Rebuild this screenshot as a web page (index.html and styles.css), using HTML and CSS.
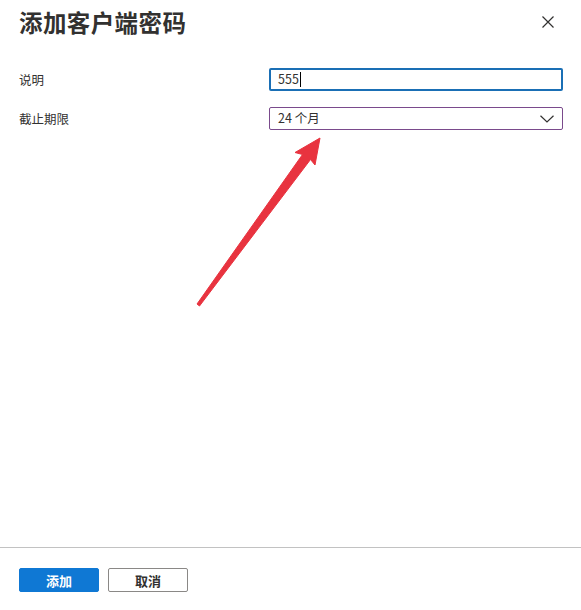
FILE: index.html
```html
<!DOCTYPE html>
<html lang="zh-CN">
<head>
<meta charset="utf-8">
<title>添加客户端密码</title>
<link rel="stylesheet" href="styles.css">
</head>
<body>
<div class="panel">
  <header class="header">
    <h1 class="title">添加客户端密码</h1>
    <button class="close" aria-label="关闭">
      <svg width="12" height="12" viewBox="0 0 12 12"><path d="M0.5 0.5 L11.5 11.5 M11.5 0.5 L0.5 11.5" stroke="#323130" stroke-width="1.2" fill="none"/></svg>
    </button>
  </header>
  <main class="form">
    <div class="row">
      <label class="label">说明</label>
      <div class="field input-field"><span class="value">555</span><span class="caret"></span></div>
    </div>
    <div class="row">
      <label class="label">截止期限</label>
      <div class="field select-field">
        <span class="value">24 个月</span>
        <svg class="chevron" width="14" height="8" viewBox="0 0 14 8"><path d="M0.5 0.8 L7 7 L13.5 0.8" stroke="#323130" stroke-width="1.2" fill="none"/></svg>
      </div>
    </div>
  </main>
  <footer class="footer">
    <button class="btn primary">添加</button>
    <button class="btn secondary">取消</button>
  </footer>
  <svg class="arrow" width="581" height="610" viewBox="0 0 581 610">
    <path d="M320 138 L315 165 L310.5 159.5 L199.5 306 L197 304 L302.5 154.5 L295 152.5 Z" fill="#e8333f" stroke="#e8333f" stroke-width="1" stroke-linejoin="round"/>
  </svg>
</div>
</body>
</html>
```
FILE: styles.css
```css
* { box-sizing: border-box; }
html, body { margin: 0; padding: 0; background: #fff; }
body {
  font-family: "Noto Sans CJK SC", "Noto Sans", "Liberation Sans", sans-serif;
  color: #323130;
}
.panel {
  position: relative;
  width: 581px;
  height: 610px;
  display: flex;
  flex-direction: column;
}
.header {
  height: 44px;
  padding: 0 20px 0 19px;
  display: flex;
  align-items: center;
  justify-content: space-between;
}
.title {
  margin: 0;
  font-size: 23.5px;
  font-weight: 700;
  letter-spacing: 0.4px;
  color: #323130;
  line-height: 28px;
}
.close {
  border: none;
  background: none;
  padding: 0;
  width: 14px;
  height: 14px;
  display: flex;
  align-items: center;
  justify-content: center;
  margin-right: 6px;
}
.form {
  flex: 1;
  padding: 24px 18px 0 19px;
  display: flex;
  flex-direction: column;
  gap: 16px;
}
.row {
  display: grid;
  grid-template-columns: 250px 1fr;
  align-items: center;
  height: 23px;
}
.label {
  font-size: 12.5px;
  color: #323130;
}
.field {
  height: 23px;
  display: flex;
  align-items: center;
  padding: 0 8px;
  font-size: 12.5px;
  border-radius: 2px;
}
.input-field {
  border: 2px solid #1a6fb5;
  padding-left: 7px;
}
.caret {
  display: inline-block;
  width: 1px;
  height: 15px;
  background: #000;
  margin-left: 1px;
}
.select-field {
  border: 1px solid #7a4a8c;
  justify-content: space-between;
  padding-right: 8px;
}
.value { line-height: 1; }
.footer {
  border-top: 1px solid #c2c2c2;
  height: 63px;
  padding: 20px 19px 0;
  display: flex;
  gap: 9px;
  align-items: flex-start;
}
.btn {
  width: 80px;
  height: 24px;
  font-family: inherit;
  font-size: 13px;
  font-weight: 700;
  border-radius: 2px;
  padding: 0;
  line-height: 1;
}
.primary {
  background: #0f78d4;
  border: 1px solid #0f78d4;
  color: #fff;
}
.secondary {
  background: #fff;
  border: 1px solid #8a8886;
  color: #323130;
}
.arrow {
  position: absolute;
  left: 0;
  top: 0;
  pointer-events: none;
}
```
